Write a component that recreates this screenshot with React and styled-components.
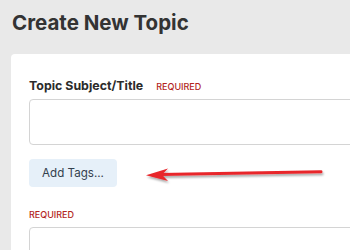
import React from "react";
import styled, { createGlobalStyle } from "styled-components";

const GlobalStyle = createGlobalStyle`
  html, body {
    margin: 0;
    padding: 0;
    background: #e9e9e9;
    font-family: Inter, "Noto Sans", sans-serif;
    overflow: hidden;
  }
`;

const Page = styled.div`
  position: relative;
  width: 350px;
  height: 250px;
  overflow: hidden;
  padding: 11px 0 0 11px;
  box-sizing: border-box;
`;

const Title = styled.h1`
  margin: 0 0 19px 1px;
  font-size: 20.5px;
  line-height: 24px;
  font-weight: 700;
  color: #333333;
`;

const Card = styled.div`
  background: #ffffff;
  border-radius: 4px 0 0 0;
  padding: 24px 0 0 18px;
  width: 400px;
  height: 300px;
  box-sizing: border-box;
`;

const Field = styled.div`
  display: flex;
  flex-direction: column;
  gap: ${(p) => p.$gap}px;
`;

const Label = styled.label`
  display: flex;
  align-items: baseline;
  gap: 13px;
  font-size: 12.4px;
  line-height: 16px;
  font-weight: 700;
  color: #2b2b2b;
`;

const Required = styled.span`
  font-size: 9px;
  line-height: 12px;
  font-weight: 500;
  color: #b3261e;
  text-transform: uppercase;
`;

const Input = styled.div`
  height: 46px;
  border: 1px solid #d4d4d4;
  border-radius: 4px;
  box-sizing: border-box;
`;

const TagButton = styled.button`
  align-self: flex-start;
  margin: 14px 0 22px;
  height: 28px;
  width: 88px;
  padding: 0;
  border: none;
  border-radius: 4px;
  background: #e6f0f9;
  color: #33404d;
  font-family: inherit;
  font-size: 11.6px;
  font-weight: 400;
`;

const Arrow = styled.svg`
  position: absolute;
  left: 0;
  top: 0;
  pointer-events: none;
`;

export default function App() {
  return (
    <>
      <GlobalStyle />
      <Page>
        <Title>Create New Topic</Title>
        <Card>
          <Field $gap={5}>
            <Label>
              Topic Subject/Title <Required>Required</Required>
            </Label>
            <Input />
          </Field>
          <TagButton>Add Tags...</TagButton>
          <Field $gap={6}>
            <Label>
              <Required>Required</Required>
            </Label>
            <Input />
          </Field>
        </Card>
        <Arrow width="350" height="250" viewBox="0 0 350 250">
          <defs>
            <filter id="shadow" x="-10%" y="-50%" width="120%" height="200%">
              <feDropShadow dx="1" dy="2" stdDeviation="1.2" floodColor="#000" floodOpacity="0.35" />
            </filter>
          </defs>
          <g filter="url(#shadow)">
            <line x1="321" y1="171.8" x2="160" y2="174.6" stroke="#e8262b" strokeWidth="3" strokeLinecap="round" />
            <polygon points="146,175.2 168,168.6 162,174.8 168,181" fill="#e8262b" />
          </g>
        </Arrow>
      </Page>
    </>
  );
}
